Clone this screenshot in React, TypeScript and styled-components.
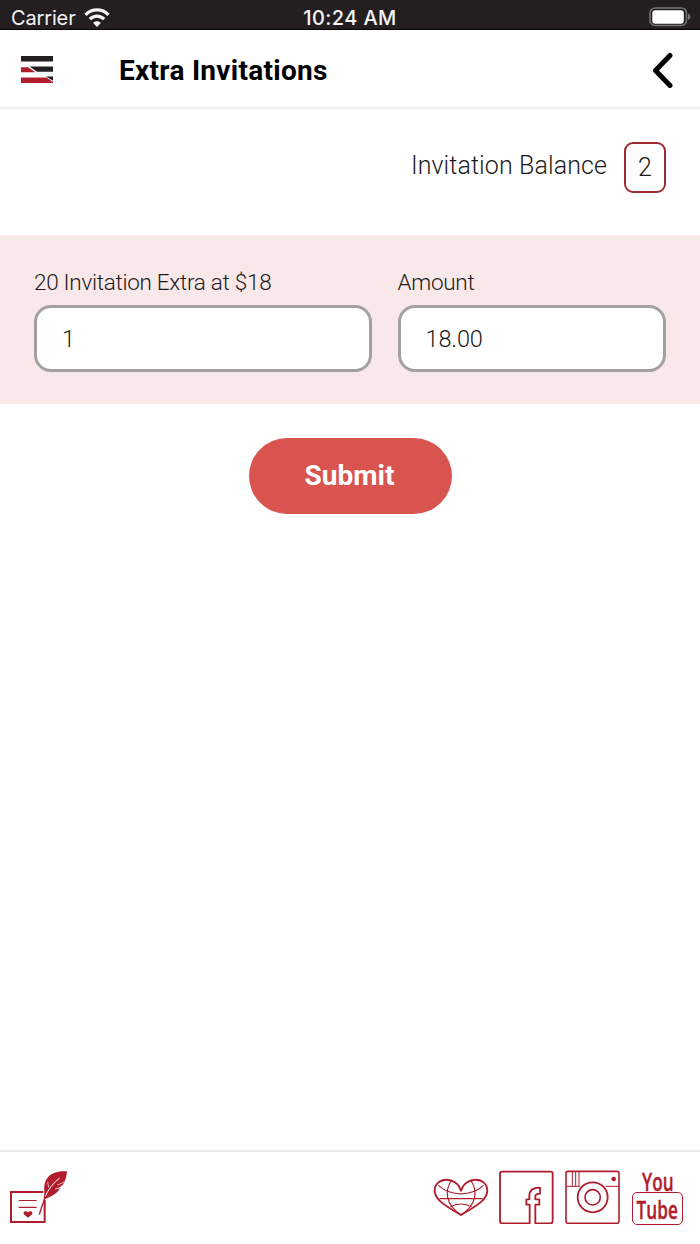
import React from "react";
import styled, { createGlobalStyle } from "styled-components";

const crimson = "#b01e2e";

const GlobalStyle = createGlobalStyle`
  * { box-sizing: border-box; }
  body { margin: 0; background: #fff; }
`;

const Screen = styled.div`
  width: 700px;
  height: 1244px;
  display: flex;
  flex-direction: column;
  overflow: hidden;
  background: #fff;
  color: #1c1a1a;
  font-family: Roboto, "Liberation Sans", sans-serif;
`;

const StatusBar = styled.div`
  height: 30px;
  flex: none;
  display: grid;
  grid-template-columns: 1fr auto 1fr;
  align-items: center;
  padding: 6px 10px 0 11px;
  background: #231f20;
  border-bottom: 1px solid #050505;
  color: #f4f4f4;
  font: 400 20px/24px Inter, sans-serif;
`;

const Carrier = styled.div`
  display: flex;
  align-items: center;
  gap: 8px;
  letter-spacing: -0.15px;
`;

const Clock = styled.div`
  font-weight: 500;
  font-size: 20px;
  letter-spacing: 0.4px;
  margin-right: 1px;
`;

const BatteryIcon = styled.svg`
  justify-self: end;
  margin: -2px -1px 0 0;
`;

const Header = styled.header`
  height: 79px;
  flex: none;
  display: flex;
  align-items: center;
  padding: 2px 26px 0 21px;
  border-bottom: 2px solid #f0f0f0;
`;

const Title = styled.h1`
  flex: 1;
  margin: 2px 0 0 66px;
  color: #000;
  font-size: 28px;
  line-height: 34px;
  font-weight: 700;
  letter-spacing: 0.28px;
`;

const IconButton = styled.button`
  display: block;
  padding: 0;
  border: 0;
  background: none;
  line-height: 0;
`;

const BalanceRow = styled.section`
  height: 125.5px;
  flex: none;
  display: flex;
  justify-content: flex-end;
  align-items: flex-start;
  gap: 17px;
  padding: 33px 34px 0;
  font-size: 25px;
  font-weight: 300;
`;

const BalanceLabel = styled.span`
  line-height: 47px;
  letter-spacing: 0.1px;
`;

const BalanceBox = styled.span`
  width: 42px;
  height: 51px;
  border: 2px solid #a02a33;
  border-radius: 9px;
  line-height: 48px;
  text-align: center;
`;

const OrderPanel = styled.section`
  height: 169.5px;
  flex: none;
  display: grid;
  grid-template-columns: 338px 268px;
  column-gap: 25.5px;
  align-content: start;
  padding: 33px 34px 0;
  background: #f8e8e9;
`;

const Field = styled.label`
  display: flex;
  flex-direction: column;
  font-size: 22.5px;
  font-weight: 300;
  line-height: 28px;
  letter-spacing: -0.28px;
`;

const Input = styled.input`
  width: 100%;
  height: 67px;
  margin-top: 9.5px;
  padding: 0 26px 0 25px;
  border: 3px solid #a3a0a0;
  border-radius: 17px;
  background: #fff;
  color: #1c1a1a;
  font: 300 23.5px Roboto, sans-serif;
  letter-spacing: -0.1px;
  outline: none;
`;

const Submit = styled.button`
  width: 203px;
  height: 76px;
  flex: none;
  align-self: center;
  margin-top: 33.5px;
  padding: 0 1px 1px 0;
  border: 0;
  border-radius: 39px;
  background: #d9534f;
  color: #fff;
  font: 700 28px Roboto, sans-serif;
`;

const Footer = styled.footer`
  height: 94px;
  margin-top: auto;
  flex: none;
  display: flex;
  justify-content: space-between;
  align-items: flex-start;
  padding: 16px 16px 0 8px;
  border-top: 2px solid #e9e9e9;
`;

const SocialLinks = styled.nav`
  display: flex;
  gap: 9px;
`;

const YouTubeMark = styled.div`
  width: 53px;
  margin-left: 1px;
  display: flex;
  flex-direction: column;
  align-items: center;
  color: ${crimson};
  font: 600 26px/26px "Open Sans", sans-serif;
`;

const Condensed = styled.span<{ $ratio: number }>`
  display: block;
  transform: scaleX(${(p) => p.$ratio});
  -webkit-text-stroke: 0.4px ${crimson};
`;

const TubeBox = styled.div`
  width: 51px;
  height: 33px;
  margin-top: -2px;
  display: flex;
  justify-content: center;
  border: 1.5px solid ${crimson};
  border-radius: 5px;
  line-height: 33px;
`;

const WifiIcon = () => (
  <svg width="26" height="20" viewBox="0 0 26 20" fill="none" stroke="#f4f4f4" strokeWidth="3.2">
    <path d="M1.5 6.9C8 .3 18 .3 24.500 6.900" />
    <path d="M5.800 11.200C10 7.100 16 7.100 20.200 11.200" />
    <path d="M13 19l-4-4.200c2.300-2.200 5.700-2.200 8 0z" fill="#f4f4f4" stroke="none" />
  </svg>
);

const MenuIcon = () => (
  <svg width="32" height="28" viewBox="0 0 32 28">
    <path fill="#231f20" d="M0 0h32v5.400H0zM8.500 10.600H32v5.200H16zM25 20.600h7v4.200z" />
    <path fill={crimson} d="M0 11.300h7l7.500 4.900H0zM0 21.500h25.500l6.500 4.400v1H0z" />
  </svg>
);

const LetterIcon = () => (
  <svg width="62" height="58" viewBox="24 84 186 174" fill="none" stroke={crimson}>
    <path strokeWidth="6" d="M134 180V246H33V156H130" />
    <path strokeWidth="3.500" d="M56 181.500h54M56 202h54" />
    <path fill={crimson} stroke="none" d="M84 233l-11-9c-5-5-1-10 4-10 4 0 6 2 7 4 1-2 3-4 7-4 5 0 9 5 4 10z" />
    <path strokeWidth="4" d="M134 176C128 192 122 208 118 224" />
    <path fill={crimson} stroke="none" d="M201 94c-22-2-43 3-54 14-15 15-15 33-14 51l-2 20c15-6 31-13 41-23l9-12-7 1 15-11c8-12 11-26 12-40z" />
    <path stroke="#fff" strokeWidth="3" d="M136 169c9-22 24-40 43-55" />
    <path stroke="#fff" strokeWidth="2" d="M143 126l3 16M172 135l22-9M165 147l18-4" />
  </svg>
);

const HeartGlobeIcon = () => (
  <svg width="56" height="56" viewBox="24 24 168 168" fill="none" stroke={crimson} strokeWidth="3.600">
    <path strokeWidth="5.500" d="M108 165C77 145 29 124 29 92c0-42 67-46 79 2 12-48 79-44 79-2 0 32-48 53-79 73z" />
    <path d="M40 76c38 34 98 34 136 0M43 116h130M76 140c20-10 44-10 64 0M80 60c-22 33-19 73 28 105M137 60c22 33 19 73-29 105" />
  </svg>
);

const FacebookIcon = () => (
  <svg width="57" height="56" viewBox="220 24 171 168" fill="none" stroke={crimson} strokeWidth="5.500" strokeLinejoin="round">
    <path d="M315 190H232q-6 0-6-6V41q0-6 6-6H378q6 0 6 6V184q0 6-6 6H332V134h12V118H332v-9q0-8 14-8V83c-21 0-32 9-32 25v10h-9v16h10z" />
  </svg>
);

const CameraIcon = () => (
  <svg width="57" height="56" viewBox="26 24 171 168" fill="none" stroke={crimson} strokeWidth="4.800">
    <rect x="32" y="34" width="159" height="156" rx="6" />
    <path strokeWidth="3" d="M32 79h41M151 79h40M51 34v45M61 34v45M71 34v45" />
    <circle cx="112" cy="112" r="45" strokeWidth="5.500" />
    <circle cx="112" cy="112" r="23" />
    <circle cx="175" cy="57" r="7" fill={crimson} stroke="none" />
  </svg>
);

export default function App() {
  return (
    <>
      <GlobalStyle />
      <Screen>
        <StatusBar>
          <Carrier>
            Carrier <WifiIcon />
          </Carrier>
          <Clock>10:24 AM</Clock>
          <BatteryIcon width="42" height="20" viewBox="0 0 42 20">
            <rect x="1" y="1" width="36.500" height="17.500" rx="5" fill="none" stroke="#777475" strokeWidth="1.600" />
            <rect x="3.300" y="3.200" width="31.500" height="13.500" rx="3" fill="#fff" />
            <path d="M39 6.500q2.500 1 2.500 3.300T39 13z" fill="#777475" />
          </BatteryIcon>
        </StatusBar>
        <Header>
          <IconButton aria-label="Menu">
            <MenuIcon />
          </IconButton>
          <Title>Extra Invitations</Title>
          <IconButton aria-label="Back">
            <svg width="22" height="36" viewBox="0 0 22 36" fill="none" stroke="#000" strokeWidth="5" strokeLinecap="round" strokeLinejoin="round">
              <path d="M18 3.500L3.500 18.500L18 33.500" />
            </svg>
          </IconButton>
        </Header>
        <BalanceRow>
          <BalanceLabel>Invitation Balance</BalanceLabel>
          <BalanceBox>2</BalanceBox>
        </BalanceRow>
        <OrderPanel>
          <Field>
            20 Invitation Extra at $18
            <Input defaultValue="1" />
          </Field>
          <Field>
            Amount
            <Input defaultValue="18.00" />
          </Field>
        </OrderPanel>
        <Submit>Submit</Submit>
        <Footer>
          <LetterIcon />
          <SocialLinks>
            <HeartGlobeIcon />
            <FacebookIcon />
            <CameraIcon />
            <YouTubeMark>
              <Condensed $ratio={0.66}>You</Condensed>
              <TubeBox>
                <Condensed $ratio={0.66}>Tube</Condensed>
              </TubeBox>
            </YouTubeMark>
          </SocialLinks>
        </Footer>
      </Screen>
    </>
  );
}
